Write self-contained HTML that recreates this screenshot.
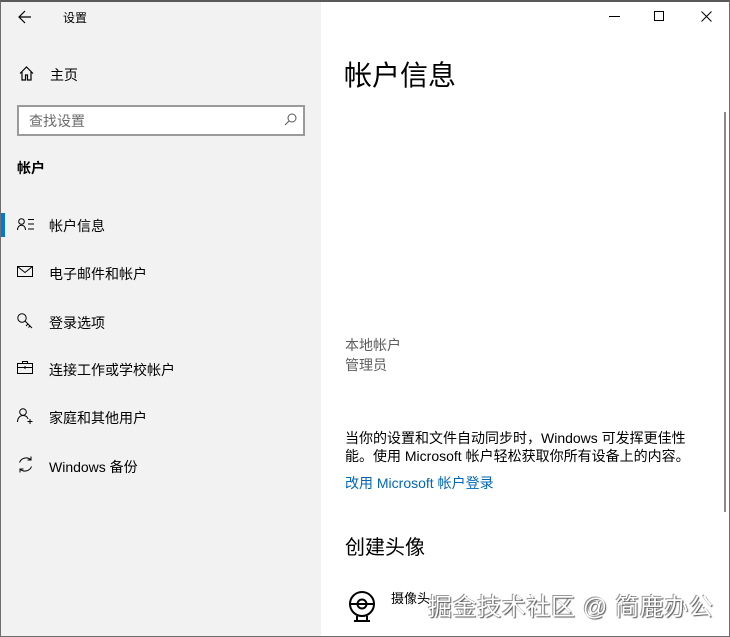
<!DOCTYPE html>
<html><head><meta charset="utf-8"><style>
*{margin:0;padding:0;box-sizing:border-box}
body{width:730px;height:637px;overflow:hidden;background:#fff;font-family:"Liberation Sans","Noto Sans CJK SC",sans-serif;color:#000;position:relative}
.win{position:absolute;left:0;top:0;width:730px;height:637px;border:1px solid #6e6e6e;border-top:2px solid #5a5a5a}
.left{position:absolute;left:1px;top:2px;width:320px;height:634px;background:#f2f2f2}
.a{position:absolute;white-space:nowrap}
.t14{font-size:14px}
svg{position:absolute;overflow:visible}
</style></head><body>
<div class="win"></div>
<div class="left"></div>
<svg style="left:18px;top:10px" width="14" height="14"><path d="M13 7H1M7 1L1 7l6 6" fill="none" stroke="#000" stroke-width="1.2"/></svg>
<div class="a" style="left:63px;top:9px;font-size:12px">设置</div>
<svg style="left:19px;top:66px" width="15" height="15"><path d="M1 7.5L7.5 1 14 7.5M3 6v8h3.5v-5h2v5H12V6" fill="none" stroke="#000" stroke-width="1.2"/></svg>
<div class="a t14" style="left:50px;top:65px">主页</div>
<div class="a" style="left:17px;top:105px;width:288px;height:31px;border:2px solid #9a9a9a;background:#fff"></div>
<div class="a t14" style="left:29px;top:111px;color:#6b6b6b">查找设置</div>
<svg style="left:284px;top:113px" width="13" height="13"><circle cx="8" cy="5" r="4" fill="none" stroke="#555" stroke-width="1"/><path d="M5 8L1 12" stroke="#555" stroke-width="1"/></svg>
<div class="a t14" style="left:17px;top:158px;font-weight:bold">帐户</div>
<div class="a" style="left:1px;top:213px;width:4px;height:24px;background:#0078d7"></div>
<svg style="left:17px;top:218px" width="18" height="13"><circle cx="4.5" cy="3.5" r="2.8" fill="none" stroke="#000"/><path d="M0.5 12c0-3 1.8-4.8 4-4.8s4 1.8 4 4.8M11 1.5h6M11 6h6M11 11h6" fill="none" stroke="#000"/></svg>
<div class="a t14" style="left:49px;top:216px">帐户信息</div>
<svg style="left:17px;top:266px" width="17" height="12"><rect x="0.5" y="0.5" width="15" height="10" fill="none" stroke="#000"/><path d="M0.5 0.5l7.5 6 7.5-6" fill="none" stroke="#000"/></svg>
<div class="a t14" style="left:49px;top:264px">电子邮件和帐户</div>
<svg style="left:17px;top:313px" width="17" height="17"><circle cx="5" cy="5" r="4.2" fill="none" stroke="#000"/><path d="M8 8l7 7M11 11l-2 2M13 13l-1.5 1.5" fill="none" stroke="#000"/></svg>
<div class="a t14" style="left:49px;top:313px">登录选项</div>
<svg style="left:17px;top:361px" width="17" height="13"><rect x="0.5" y="2.5" width="15" height="10" fill="none" stroke="#000"/><path d="M5.5 2.5v-2h5v2M0.5 6.5h15M8 5v3" fill="none" stroke="#000"/></svg>
<div class="a t14" style="left:49px;top:360px">连接工作或学校帐户</div>
<svg style="left:17px;top:408px" width="17" height="17"><circle cx="6" cy="4" r="3.3" fill="none" stroke="#000"/><path d="M0.5 14c0-4 2.5-6.5 5.5-6.5s4.5 1.5 5 3.5M13 11v5M10.5 13.5h5" fill="none" stroke="#000"/></svg>
<div class="a t14" style="left:49px;top:408px">家庭和其他用户</div>
<svg style="left:17px;top:456px" width="17" height="17"><path d="M2.5 6.5A7 7 0 0 1 14 4M14.5 10.5A7 7 0 0 1 3 13M14 0.5V4h-3.5M3 16.5V13h3.5" fill="none" stroke="#000"/></svg>
<div class="a t14" style="left:49px;top:457px">Windows 备份</div>
<svg style="left:609px;top:16px" width="12" height="2"><path d="M0 .5h11" stroke="#000"/></svg>
<svg style="left:654px;top:11px" width="11" height="11"><rect x=".5" y=".5" width="9" height="9" fill="none" stroke="#000"/></svg>
<svg style="left:701px;top:11px" width="11" height="11"><path d="M.5 .5l10 10M10.5 .5l-10 10" stroke="#000"/></svg>
<div class="a" style="left:724px;top:112px;width:2px;height:400px;background:#8a8a8a"></div>
<div class="a" style="left:344px;top:54px;font-size:28px">帐户信息</div>
<div class="a t14" style="left:345px;top:335px;color:#5d5d5d">本地帐户</div>
<div class="a t14" style="left:345px;top:355px;color:#5d5d5d">管理员</div>
<div class="a t14" style="left:345px;top:428px">当你的设置和文件自动同步时，Windows 可发挥更佳性</div>
<div class="a t14" style="left:345px;top:446px">能。使用 Microsoft 帐户轻松获取你所有设备上的内容。</div>
<div class="a t14" style="left:345px;top:473px;color:#0067b8">改用 Microsoft 帐户登录</div>
<div class="a" style="left:345px;top:531px;font-size:20px">创建头像</div>
<svg style="left:348px;top:591px" width="30" height="32"><circle cx="14" cy="13" r="12" fill="none" stroke="#000" stroke-width="2"/><circle cx="14" cy="13" r="4.5" fill="none" stroke="#000" stroke-width="2"/><path d="M3 13h22M9 25v4M19 25v4M6 30h16" fill="none" stroke="#000" stroke-width="2"/></svg>
<div class="a" style="left:391px;top:588px;font-size:13px">摄像头</div>
<div class="a" style="left:428px;top:587px;font-size:24px;letter-spacing:0.6px;color:#fff;text-shadow:1px 1px 1px #555,-1px -1px 0 #999">掘金技术社区 @ 简鹿办公</div>
</body></html>
